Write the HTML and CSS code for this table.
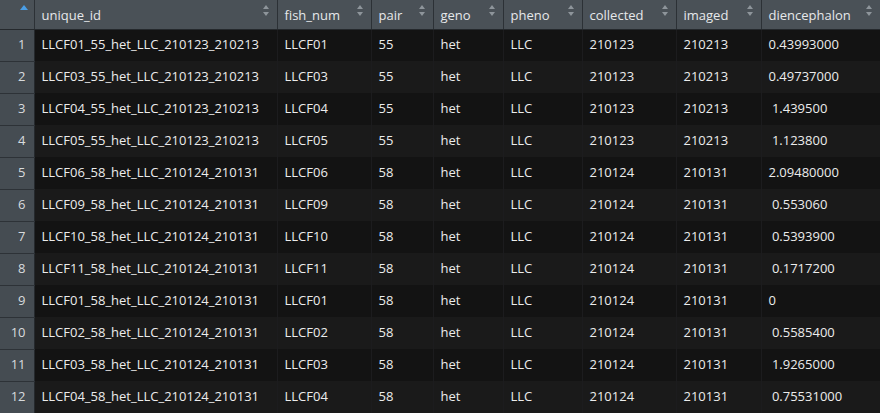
FILE: index.html
```html
<!DOCTYPE html>
<html lang="en">
<head>
	<meta charset="UTF-8">
	<title>Data viewer</title>
	<link rel="stylesheet" href="styles.css">
</head>
<body>
	<table class="grid">
		<colgroup>
			<col class="c-idx"><col class="c-id"><col class="c-fish"><col class="c-pair"><col class="c-geno">
			<col class="c-pheno"><col class="c-coll"><col class="c-img"><col class="c-dien">
		</colgroup>
		<thead>
			<tr>
				<th class="idx"><span class="sort-asc"></span></th>
				<th>unique_id<span class="sort"></span></th>
				<th>fish_num<span class="sort"></span></th>
				<th>pair<span class="sort"></span></th>
				<th>geno<span class="sort"></span></th>
				<th>pheno<span class="sort"></span></th>
				<th>collected<span class="sort"></span></th>
				<th>imaged<span class="sort"></span></th>
				<th>diencephalon<span class="sort"></span></th>
			</tr>
		</thead>
		<tbody id="rows"></tbody>
	</table>

	<script>
		var data = [
			['LLCF01_55_het_LLC_210123_210213', 'LLCF01', '55', '210123', '210213', '0.43993000'],
			['LLCF03_55_het_LLC_210123_210213', 'LLCF03', '55', '210123', '210213', '0.49737000'],
			['LLCF04_55_het_LLC_210123_210213', 'LLCF04', '55', '210123', '210213', ' 1.439500'],
			['LLCF05_55_het_LLC_210123_210213', 'LLCF05', '55', '210123', '210213', ' 1.123800'],
			['LLCF06_58_het_LLC_210124_210131', 'LLCF06', '58', '210124', '210131', '2.09480000'],
			['LLCF09_58_het_LLC_210124_210131', 'LLCF09', '58', '210124', '210131', ' 0.553060'],
			['LLCF10_58_het_LLC_210124_210131', 'LLCF10', '58', '210124', '210131', ' 0.5393900'],
			['LLCF11_58_het_LLC_210124_210131', 'LLCF11', '58', '210124', '210131', ' 0.1717200'],
			['LLCF01_58_het_LLC_210124_210131', 'LLCF01', '58', '210124', '210131', '0'],
			['LLCF02_58_het_LLC_210124_210131', 'LLCF02', '58', '210124', '210131', ' 0.5585400'],
			['LLCF03_58_het_LLC_210124_210131', 'LLCF03', '58', '210124', '210131', ' 1.9265000'],
			['LLCF04_58_het_LLC_210124_210131', 'LLCF04', '58', '210124', '210131', ' 0.75531000']
		];

		var tbody = document.getElementById('rows');
		var html = '';
		for (var i = 0; i < data.length; i++) {
			var d = data[i];
			html += '<tr>' +
				'<td class="idx">' + (i + 1) + '</td>' +
				'<td>' + d[0] + '</td>' +
				'<td>' + d[1] + '</td>' +
				'<td>' + d[2] + '</td>' +
				'<td>het</td>' +
				'<td>LLC</td>' +
				'<td>' + d[3] + '</td>' +
				'<td>' + d[4] + '</td>' +
				'<td class="num">' + d[5] + '</td>' +
				'</tr>';
		}
		tbody.innerHTML = html;
	</script>
</body>
</html>
```

FILE: styles.css
```css
* {
	margin: 0;
	padding: 0;
	box-sizing: border-box;
}

body {
	background-color: #131313;
	font-family: "Open Sans", "Noto Sans", sans-serif;
	font-size: 13px;
	color: #ececec;
	overflow: hidden;
}

.grid {
	width: 880px;
	table-layout: fixed;
	border-collapse: collapse;
}

.c-idx { width: 34px; }
.c-id { width: 243px; }
.c-fish { width: 94px; }
.c-pair { width: 62px; }
.c-geno { width: 70px; }
.c-pheno { width: 79px; }
.c-coll { width: 94px; }
.c-img { width: 85px; }
.c-dien { width: 119px; }

/* header */
.grid th {
	position: relative;
	height: 29px;
	padding: 2px 18px 0 7px;
	text-align: left;
	font-weight: normal;
	color: #e6e8ea;
	background-color: #4a5157;
	border-right: 1px solid #2c3136;
	border-bottom: 1px solid #25292d;
	white-space: nowrap;
}

/* sort arrows */
.sort {
	position: absolute;
	top: 5px;
	right: 7px;
	width: 7px;
	height: 11px;
}

.sort::before,
.sort::after {
	content: "";
	position: absolute;
	left: 0;
	border-left: 3.5px solid transparent;
	border-right: 3.5px solid transparent;
}

.sort::before {
	top: 0;
	border-bottom: 4px solid #8e959b;
}

.sort::after {
	bottom: 0;
	border-top: 4px solid #8e959b;
}

.sort-asc {
	position: absolute;
	top: 5px;
	left: 20px;
	border-left: 4px solid transparent;
	border-right: 4px solid transparent;
	border-bottom: 5px solid #4a9ee6;
}

/* body */
.grid td {
	height: 32px;
	padding: 0 7px 3px;
	white-space: pre;
	border-right: 1px solid #1c1c1e;
}

.grid tbody tr:nth-child(odd) td {
	background-color: #131313;
}

.grid tbody tr:nth-child(even) td {
	background-color: #1a1a1a;
}

.grid td.idx {
	text-align: right;
	padding-right: 8px;
	color: #d8dbde;
	background-color: #454c52 !important;
	border-right: 1px solid #25292d;
	border-bottom: 1px solid #2d3237;
}
```
